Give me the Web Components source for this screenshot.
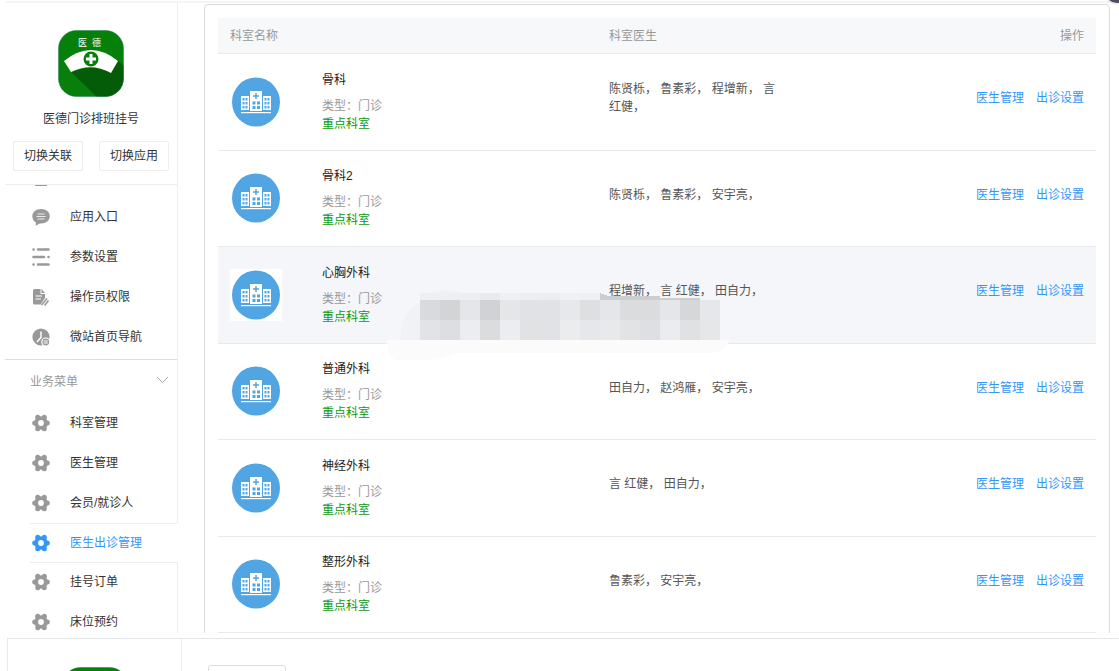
<!DOCTYPE html>
<html lang="zh-CN">
<head>
<meta charset="utf-8">
<title>医德门诊排班挂号</title>
<style>
body{margin:0;background:#fff;color:#333;font:12px/18px "Liberation Sans","Noto Sans CJK SC",sans-serif}
</style>
</head>
<body>
<clinic-app></clinic-app>
<script>
function define(name, html, render) {
  const template = document.createElement('template');
  template.innerHTML = html;
  customElements.define(name, class extends HTMLElement {
    constructor() {
      super();
      this.attachShadow({ mode: 'open' }).append(template.content.cloneNode(true));
    }
    connectedCallback() { if (render) render(this.shadowRoot, this); }
  });
}

/* Green nurse-cap logo; the slot-free "plain" variant has no lettering */
define('app-logo', `
<style>:host{display:block}:host([plain]) text{display:none}svg{display:block;width:66px;height:67px}text{font:9px "Noto Sans CJK SC",sans-serif;fill:#fff}</style>
<svg viewBox="0 0 66 67" aria-hidden="true">
  <defs><clipPath id="tile"><rect x=".5" y=".5" width="65" height="66" rx="18"/></clipPath></defs>
  <g clip-path="url(#tile)">
    <rect width="66" height="67" fill="#067f0b"/>
    <path d="M13 42 39 67H66V36L59 30 32 37Z" fill="#045c08"/>
  </g>
  <rect x=".5" y=".5" width="65" height="66" rx="18" fill="none" stroke="#2b7a55" stroke-opacity=".5"/>
  <path d="M6 31Q33 9 60 31L53 43Q33 32 13 42Z" fill="#fff"/>
  <circle cx="33" cy="29" r="7.5" fill="#067f0b"/>
  <path d="M33 24v10M28 29h10" stroke="#fff" stroke-width="3"/>
  <text x="20" y="16">医</text><text x="34" y="16">德</text>
</svg>`);

/* Blue hospital avatar */
define('dept-avatar', `
<style>:host{display:block;background:#fff}svg{display:block;width:52px;height:52px}</style>
<svg viewBox="0 0 52 52" aria-hidden="true">
  <ellipse cx="26" cy="26" rx="24" ry="24.5" fill="#52a5e3"/>
  <g fill="#fff"><rect x="20" y="15" width="12" height="20"/><rect x="11" y="20" width="8" height="14"/><rect x="33" y="20" width="8" height="14"/><rect x="11" y="36" width="30" height="1.200"/></g>
  <path d="M26 17v6M23 20h6" stroke="#52a5e3" stroke-width="1.5"/>
  <g fill="#52a5e3">
    <path d="M22.5 25.500h3v3h-3zM27 25.500h3v3h-3zM22.500 30h3v3h-3zM27 30h3v3h-3z"/>
    <path d="M12.500 22h2v2.500h-2zM15.500 22h2v2.500h-2zM12.500 26h2v2.500h-2zM15.500 26h2v2.500h-2zM12.500 30h2v2.500h-2zM15.500 30h2v2.500h-2z"/>
    <path d="M34.500 22h2v2.500h-2zM37.500 22h2v2.500h-2zM34.500 26h2v2.500h-2zM37.500 26h2v2.500h-2zM34.500 30h2v2.500h-2zM37.500 30h2v2.500h-2z"/>
  </g>
</svg>`);

const ICONS = {
  chat: '<path fill="currentColor" d="M9 1C4 1 .3 4.100.3 8.300c0 2.800 1.600 5.200 3.700 6.400L3.600 17.800l4.300-2.300C13.500 16 17.800 12.700 17.800 8.300 17.800 4 14 1 9 1Z"/><path d="M5.500 6h7M4.500 8.500h9M5.500 11h7" stroke="#fff" stroke-opacity=".8"/>',
  sliders: '<g stroke="currentColor" stroke-width="2.500" stroke-linecap="round"><path d="M6 1.500h10.500M1.500 9H12M6 16.500h10.500M1.500 1.500h.1M16.500 9h.1M1.500 16.500h.1"/></g>',
  doc: '<path fill="currentColor" d="M1 2.500Q1 1 2.500 1H8.500v5h4.500v4L8.500 16.500H2.500Q1 16.500 1 15ZM9.500 1l3.500 4H9.500Z"/><path d="M3.500 8h6.500M3.500 11h5.500" stroke="#fff"/><path d="m9.500 17 5.500-6.500M12.500 17.500l4-5" stroke="currentColor" stroke-width="1.600" fill="none"/>',
  clock: '<circle cx="9" cy="9" r="8.600" fill="currentColor"/><path d="M9 3.500V9.500L5 14" stroke="#fff" stroke-width="1.500" fill="none"/><circle cx="13.800" cy="14" r="4" fill="currentColor" stroke="#fff" stroke-width="1.200"/><path d="M11.800 13h4M11.800 15h4" stroke="#fff"/>',
  gear: '<g fill="currentColor"><circle cx="9" cy="9" r="6.800"/><circle cx="2.700" cy="9" r="2.500"/><circle cx="15.300" cy="9" r="2.500"/><circle cx="5.700" cy="3.200" r="2.500"/><circle cx="12.300" cy="3.200" r="2.500"/><circle cx="5.700" cy="14.800" r="2.500"/><circle cx="12.300" cy="14.800" r="2.500"/></g><circle cx="9" cy="9" r="2.900" fill="#fff"/>'
};

define('menu-item', `
<style>
:host{display:block;height:40px;padding-left:25px;border-right:1px solid #eee}
:host,a{box-sizing:border-box}
a{display:flex;align-items:center;gap:20px;height:100%;padding-left:2px;color:#333;text-decoration:none}
svg{width:18px;height:18px;color:#999;flex:none}
:host([active]){padding-left:0;margin:0 0 -1px 25px;border-right:1px solid #fff;border-block:1px solid #eee}
:host([active]) a,:host([active]) svg{color:#3296fa}
</style>
<a href="#"><svg viewBox="0 0 18 18" aria-hidden="true"></svg><slot></slot></a>`,
(root, host) => {
  root.querySelector('svg').innerHTML = ICONS[host.getAttribute('icon') || 'gear'];
  if (host.hasAttribute('active')) root.querySelector('a').setAttribute('aria-current', 'page');
});

define('side-bar', `
<style>
:host{display:flex;flex-direction:column;width:173px;flex:none;overflow:hidden}
header{display:flex;flex-direction:column;align-items:center;gap:13px;padding:28px 0 13px;border-right:1px solid #eee;border-bottom:1px solid #eee}
.buttons{display:flex;gap:16px}
.buttons button{width:70px;height:30px;padding:0;border:1px solid #eee;border-radius:2px;background:#fff;color:#333;font:inherit}
nav{flex:1;min-height:0;overflow:hidden}
.scrolled{box-sizing:border-box;height:12px;padding-left:30px;border-right:1px solid #eee}
.scrolled i{display:block;width:12px;height:1px;background:#999}
.group{padding-bottom:2px;border-right:1px solid #eee}
.group menu-item{border:0}
.heading{box-sizing:border-box;display:flex;align-items:center;justify-content:space-between;width:100%;height:44px;padding:0 8px 0 25px;border:0;border-top:1px solid #ddd;border-right:1px solid #eee;background:#fff;color:#999;font:inherit}
.heading svg{width:13px;height:8px;margin-bottom:4px}
h1{margin:0;font:inherit}
</style>
<header>
  <app-logo></app-logo>
  <h1>医德门诊排班挂号</h1>
  <div class="buttons"><button type="button">切换关联</button><button type="button">切换应用</button></div>
</header>
<nav>
  <div class="scrolled"><i></i></div>
  <div class="group">
    <menu-item icon="chat">应用入口</menu-item>
    <menu-item icon="sliders">参数设置</menu-item>
    <menu-item icon="doc">操作员权限</menu-item>
    <menu-item icon="clock">微站首页导航</menu-item>
  </div>
  <button class="heading" type="button" aria-expanded="true">业务菜单
    <svg viewBox="0 0 13 8" fill="none" stroke="#aaa" aria-hidden="true"><path d="m1 1 5.500 5.500L12 1"/></svg>
  </button>
  <menu-item>科室管理</menu-item>
  <menu-item>医生管理</menu-item>
  <menu-item>会员/就诊人</menu-item>
  <menu-item active>医生出诊管理</menu-item>
  <menu-item>挂号订单</menu-item>
  <menu-item>床位预约</menu-item>
</nav>`);

define('privacy-mask', `
<style>:host{display:block;pointer-events:none}svg{display:block;width:344px;height:70px}</style>
<svg viewBox="0 0 344 70" aria-hidden="true">
  <path d="M13 50Q14 22 32 13Q36 0 58 0Q70 0 75 3H213V10H333V50Z" fill="#f1f2f5"/>
  <path d="M0 50H343Q338 62 326 63H70Q55 69 45 70H10Q1 69 0 50Z" fill="#fbfbfc"/>
  <g id="cells" shape-rendering="crispEdges"></g>
</svg>`, root => {
  const rows = [
    [3, 7, ['#eeeff2','#eeeff2','#edeef1','#e9eaec','#eff0f3','#edeef1','#ecedf0','#eff1f4','#eff0f3']],
    [10, 20, ['#d9dadd','#d3d4d6','#e5e6e9','#d1d2d6','#e5e6e7','#e1e2e5','#e1e2e6','#e7e8ec','#dedfe1','#e5e6e9','#dbdcdd','#dbdcdd','#e5e6ea','#d6d7d9','#e6e7eb']],
    [30, 20, ['#e2e3e7','#dddee2','#ecedf1','#dbdcdd','#ecedf1','#e1e2e3','#e1e2e6','#ebecee','#e6e7eb','#e8e9eb','#e2e3e4','#dedfe3','#ebecf0','#e0e1e3','#e6e7e8']]
  ];
  let out = '<path d="M213 3l8 3h32v4h-40ZM253 6h20v4h-20ZM273 8h40v2h-40Z" fill="#cccdd1"/>';
  rows.forEach(([y, h, colours]) => colours.forEach((c, i) => {
    out += `<rect x="${33 + i * 20}" y="${y}" width="20" height="${h}" fill="${c}"/>`;
  }));
  root.querySelector('#cells').innerHTML = out;
});

const DEPARTMENTS = [
  ['骨科', '陈贤栎， 鲁素彩， 程增新， 言 红健，'],
  ['骨科2', '陈贤栎， 鲁素彩， 安宇亮，'],
  ['心胸外科', '程增新， 言 红健， 田自力，', 'hover'],
  ['普通外科', '田自力， 赵鸿雁， 安宇亮，'],
  ['神经外科', '言 红健， 田自力，'],
  ['整形外科', '鲁素彩， 安宇亮，']
];

define('dept-table', `
<style>
:host{display:block;position:relative;padding:13px 13px 0;border:1px solid #ddd;border-radius:4px 4px 0 0}
table{width:100%;height:615px;table-layout:fixed;border-collapse:separate;border-spacing:0}
.name{width:379px}.ops{width:200px}
th,td{box-sizing:border-box;padding:0 12px;border-bottom:1px solid #e9eaec;text-align:left;font-weight:normal}
th{height:36px;background:#f7f8fa;color:#999}
th:last-child,td:last-child{text-align:right}
.hover{background:#f4f6fa}
.dept{display:flex;align-items:center;gap:40px}
h2,p{margin:0;font:inherit}
h2{margin-bottom:8px;color:#222}
.type{color:#999}.key{color:#109a10}
.doctors,.actions{padding-bottom:7px}
.doctors p{position:relative;z-index:1;max-width:178px;color:#555;text-spacing-trim:space-all}
.actions a{margin-left:12px;color:#3296fa;text-decoration:none}
privacy-mask{position:absolute;left:182px;top:285px}
</style>
<table>
  <colgroup><col class="name"><col><col class="ops"></colgroup>
  <thead><tr><th scope="col">科室名称</th><th scope="col">科室医生</th><th scope="col">操作</th></tr></thead>
  <tbody></tbody>
</table>
<privacy-mask></privacy-mask>`, root => {
  root.querySelector('tbody').innerHTML = DEPARTMENTS.map(([name, doctors, state = '']) => `
    <tr class="${state}">
      <td><div class="dept"><dept-avatar></dept-avatar><div><h2>${name}</h2><p class="type">类型：门诊</p><p class="key">重点科室</p></div></div></td>
      <td class="doctors"><p>${doctors}</p></td>
      <td class="actions"><a href="#">医生管理</a><a href="#">出诊设置</a></td>
    </tr>`).join('');
});

/* Top edge of the following page section */
define('next-section', `
<style>
:host{display:flex;height:33px;margin-left:7px;border-left:1px solid #e8eaee;border-top:1px solid #e4e5e8;box-sizing:border-box;overflow:hidden}
aside{box-sizing:border-box;display:flex;justify-content:center;width:174px;padding-top:28px;border-right:1px solid #eee}
.card{box-sizing:border-box;width:78px;height:30px;margin:26px 0 0 26px;border:1px solid #ddd;border-radius:3px}
</style>
<aside><app-logo plain></app-logo></aside><div class="card"></div>`);

define('clinic-app', `
<style>
:host{display:flex;flex-direction:column;height:100vh;gap:5px;position:relative;overflow:hidden}
.view{flex:1;min-height:0;display:flex;gap:26px;margin-left:5px;padding-top:1px;box-sizing:border-box;overflow:hidden}
.view::before{content:"";position:absolute;left:5px;right:0;top:1px;height:2px;background:#f5f5f5}
side-bar{padding-top:1px}
main{flex:1;min-width:0;padding:3px 9px 0 0}
.bubble{position:absolute;right:-10px;top:-21px;width:24px;height:24px;border-radius:50%;background:#4b4d5e;box-shadow:0 0 3px #bbb}
</style>
<div class="view"><side-bar></side-bar><main><dept-table></dept-table></main></div>
<next-section></next-section>
<span class="bubble"></span>`);
</script>
</body>
</html>
